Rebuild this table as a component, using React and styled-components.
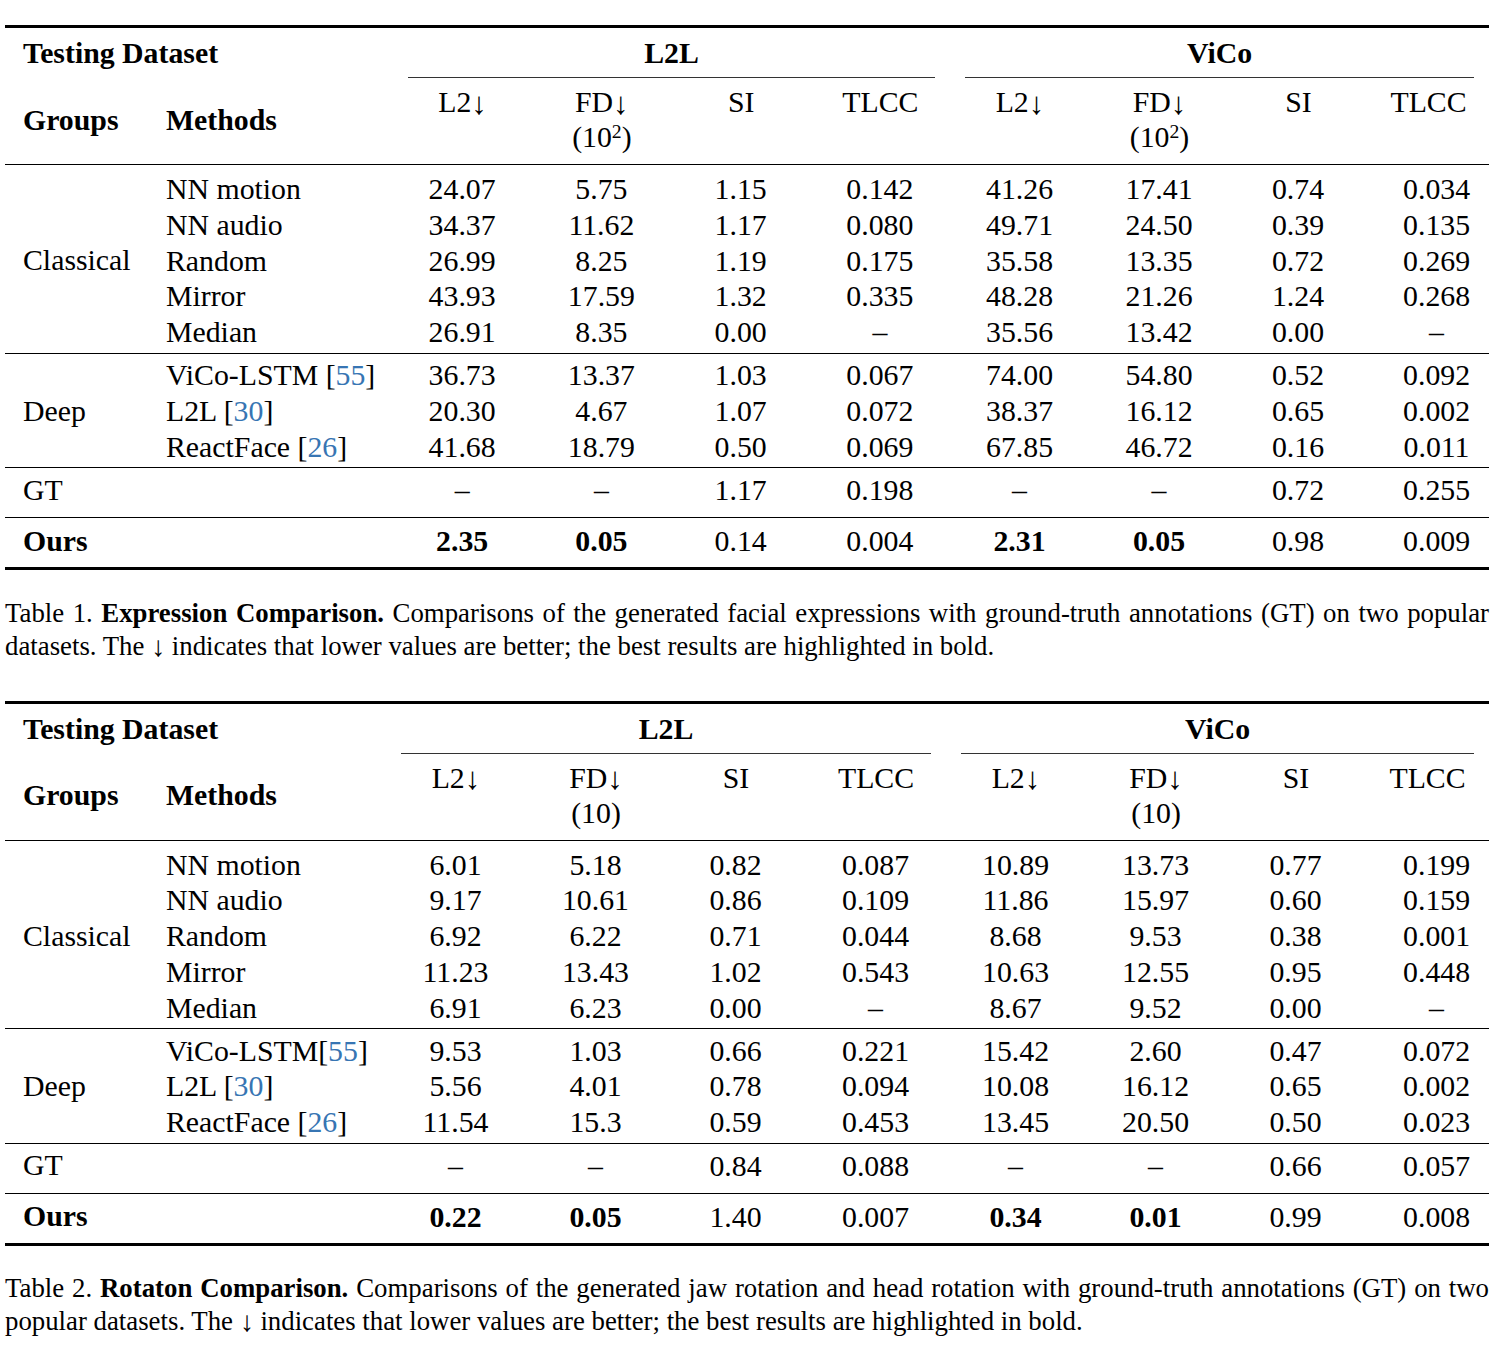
import React from 'react';
import styled, { createGlobalStyle } from 'styled-components';

const GlobalStyle = createGlobalStyle`
  html, body {
    margin: 0;
    padding: 0;
    background: #fff;
  }
  body {
    font-family: "Liberation Serif", "Times New Roman", serif;
    color: #000;
  }
`;

const Sup = styled.sup`
  font-size: 0.66em;
  vertical-align: 0.44em;
  line-height: 0;
`;

// the \downarrow of the paper sits a little lower than the text glyph
const Arrow = styled.span`
  font-size: 1.05em;
  line-height: 0;
  position: relative;
  top: 0.05em;
`;

const down = <Arrow>↓</Arrow>;

const TABLES = [
  {
    label: 'Table 1.',
    title: 'Expression Comparison.',
    lines: [
      'Comparisons of the generated facial expressions with ground-truth annotations (GT) on two popular',
      ['datasets. The ', ' indicates that lower values are better; the best results are highlighted in bold.'],
    ],
    widths: [143, 245, 139.25, 139.25, 139.25, 139.25, 140, 139, 139, 121],
    lastPad: 17,
    unit: (
      <>
        (10<Sup>2</Sup>)
      </>
    ),
    groups: [
      {
        name: 'Classical',
        pt: 6,
        pb: 3,
        rows: [
          ['NN motion', '24.07 5.75 1.15 0.142 41.26 17.41 0.74 0.034'],
          ['NN audio', '34.37 11.62 1.17 0.080 49.71 24.50 0.39 0.135'],
          ['Random', '26.99 8.25 1.19 0.175 35.58 13.35 0.72 0.269'],
          ['Mirror', '43.93 17.59 1.32 0.335 48.28 21.26 1.24 0.268'],
          ['Median', '26.91 8.35 0.00 – 35.56 13.42 0.00 –'],
        ],
      },
      {
        name: 'Deep',
        pt: 3.25,
        pb: 2.75,
        rows: [
          ['ViCo-LSTM [55]', '36.73 13.37 1.03 0.067 74.00 54.80 0.52 0.092'],
          ['L2L [30]', '20.30 4.67 1.07 0.072 38.37 16.12 0.65 0.002'],
          ['ReactFace [26]', '41.68 18.79 0.50 0.069 67.85 46.72 0.16 0.011'],
        ],
      },
      {
        name: 'GT',
        pt: 4,
        pb: 9.25,
        rows: [['', '– – 1.17 0.198 – – 0.72 0.255']],
      },
      {
        name: 'Ours',
        bold: true,
        pt: 5,
        pb: 8.25,
        rows: [['', '*2.35 *0.05 0.14 0.004 *2.31 *0.05 0.98 0.009']],
      },
    ],
  },
  {
    label: 'Table 2.',
    title: 'Rotaton Comparison.',
    lines: [
      'Comparisons of the generated jaw rotation and head rotation with ground-truth annotations (GT) on two',
      ['popular datasets. The ', ' indicates that lower values are better; the best results are highlighted in bold.'],
    ],
    widths: [143, 238, 140, 140, 140, 140, 140, 140, 140, 123],
    lastPad: 19,
    unit: '(10)',
    groups: [
      {
        name: 'Classical',
        pt: 6,
        pb: 3,
        rows: [
          ['NN motion', '6.01 5.18 0.82 0.087 10.89 13.73 0.77 0.199'],
          ['NN audio', '9.17 10.61 0.86 0.109 11.86 15.97 0.60 0.159'],
          ['Random', '6.92 6.22 0.71 0.044 8.68 9.53 0.38 0.001'],
          ['Mirror', '11.23 13.43 1.02 0.543 10.63 12.55 0.95 0.448'],
          ['Median', '6.91 6.23 0.00 – 8.67 9.52 0.00 –'],
        ],
      },
      {
        name: 'Deep',
        pt: 3.25,
        pb: 2.75,
        rows: [
          ['ViCo-LSTM[55]', '9.53 1.03 0.66 0.221 15.42 2.60 0.47 0.072'],
          ['L2L [30]', '5.56 4.01 0.78 0.094 10.08 16.12 0.65 0.002'],
          ['ReactFace [26]', '11.54 15.3 0.59 0.453 13.45 20.50 0.50 0.023'],
        ],
      },
      {
        name: 'GT',
        pt: 4,
        pb: 9.25,
        rows: [['', '– – 0.84 0.088 – – 0.66 0.057']],
      },
      {
        name: 'Ours',
        bold: true,
        pt: 5,
        pb: 8.25,
        rows: [['', '*0.22 *0.05 1.40 0.007 *0.34 *0.01 0.99 0.008']],
      },
    ],
  },
];

const Page = styled.div`
  padding: 25px 5px 0;
  width: 1484px;
`;

const Figure = styled.figure`
  margin: 0 0 38px;
`;

const Table = styled.table`
  width: 1484px;
  table-layout: fixed;
  border-collapse: separate;
  border-spacing: 0;
  font-size: 29.8px;
`;

const Col = styled.col`
  width: ${(p) => p.$w}px;
`;

const TopRow = styled.tr`
  & > th {
    border-top: 3px solid #000;
    padding: 0;
    vertical-align: top;
    line-height: 49px;
    font-weight: 700;
    white-space: nowrap;
  }
`;

const DatasetHead = styled.th`
  text-align: left;
  padding-left: 18px !important;
`;

const GroupHead = styled.div`
  margin: 0 15px;
  border-bottom: 1px solid #333;
  text-align: center;
`;

const SubHeadRow = styled.tr`
  & > th {
    padding: 6px 0 10px;
    line-height: 35px;
    font-weight: 400;
    white-space: nowrap;
  }
`;

const HeadCell = styled.th`
  vertical-align: ${(p) => (p.$middle ? 'middle' : 'top')};
  text-align: ${(p) => (p.$left ? 'left' : 'center')};
  padding-left: ${(p) => (p.$left ? 18 : 0)}px !important;
  font-weight: ${(p) => (p.$bold ? 700 : 400)} !important;
`;

const GroupRow = styled.tr`
  & > td {
    padding-top: ${(p) => p.$pt}px;
    padding-bottom: ${(p) => p.$pb}px;
    border-top: 1px solid #000;
    border-bottom: ${(p) => (p.$last ? '3px solid #000' : 'none')};
    white-space: nowrap;
  }
`;

const Cell = styled.td`
  vertical-align: ${(p) => (p.$middle ? 'middle' : 'top')};
  text-align: ${(p) => (p.$left ? 'left' : 'center')};
  padding-left: ${(p) => p.$pl || 0}px;
  font-weight: ${(p) => (p.$bold ? 700 : 400)};
`;

const Line = styled.div`
  height: 35.75px;
  line-height: 35.75px;
  font-weight: ${(p) => (p.$bold ? 700 : 'inherit')};
`;

const Cite = styled.span`
  color: #3775b3;
`;

const Caption = styled.figcaption`
  margin-top: 26.5px;
  font-size: 26.8px;
  line-height: 33px;
`;

const CaptionLine = styled.div`
  text-align: ${(p) => (p.$justify ? 'justify' : 'left')};
  text-align-last: ${(p) => (p.$justify ? 'justify' : 'auto')};
`;

const Method = ({ text }) => {
  const m = text.match(/^(.*?)\[(\d+)\]$/);
  if (!m) return text;
  return (
    <>
      {m[1]}[<Cite>{m[2]}</Cite>]
    </>
  );
};

const ResultTable = ({ data }) => {
  const last = data.widths.length - 1;
  const heads = [[<>L2{down}</>], [<>FD{down}</>, data.unit], ['SI'], ['TLCC']];

  return (
    <Figure>
      <Table>
        <colgroup>
          {data.widths.map((w, i) => (
            <Col key={i} $w={w} />
          ))}
        </colgroup>
        <thead>
          <TopRow>
            <DatasetHead colSpan={2}>Testing Dataset</DatasetHead>
            <th colSpan={4}>
              <GroupHead>L2L</GroupHead>
            </th>
            <th colSpan={4}>
              <GroupHead>ViCo</GroupHead>
            </th>
          </TopRow>
          <SubHeadRow>
            <HeadCell $left $bold $middle>
              Groups
            </HeadCell>
            <HeadCell $left $bold $middle>
              Methods
            </HeadCell>
            {[...heads, ...heads].map((h, i) => (
              <HeadCell key={i}>
                {h.map((t, j) => (
                  <div key={j}>{t}</div>
                ))}
              </HeadCell>
            ))}
          </SubHeadRow>
        </thead>
        <tbody>
          {data.groups.map((g, gi) => {
            const values = g.rows.map((r) => r[1].split(' '));
            return (
              <GroupRow
                key={g.name}
                $pt={g.pt}
                $pb={g.pb}
                $last={gi === data.groups.length - 1}
              >
                <Cell $left $pl={18} $middle $bold={g.bold}>
                  {g.name}
                </Cell>
                <Cell $left $pl={18}>
                  {g.rows.map((r, ri) => (
                    <Line key={ri}>
                      <Method text={r[0]} />
                    </Line>
                  ))}
                </Cell>
                {values[0].map((_, ci) => (
                  <Cell key={ci} $pl={ci + 2 === last ? data.lastPad : 0}>
                    {values.map((row, ri) => {
                      const v = row[ci];
                      const bold = v.startsWith('*');
                      return (
                        <Line key={ri} $bold={bold}>
                          {bold ? v.slice(1) : v}
                        </Line>
                      );
                    })}
                  </Cell>
                ))}
              </GroupRow>
            );
          })}
        </tbody>
      </Table>
      <Caption>
        <CaptionLine $justify>
          {data.label} <b>{data.title}</b> {data.lines[0]}
        </CaptionLine>
        <CaptionLine>
          {data.lines[1][0]}
          {down}
          {data.lines[1][1]}
        </CaptionLine>
      </Caption>
    </Figure>
  );
};

const App = () => {
  return (
    <>
      <GlobalStyle />
      <Page>
        {TABLES.map((t) => (
          <ResultTable key={t.label} data={t} />
        ))}
      </Page>
    </>
  );
};

export default App;
